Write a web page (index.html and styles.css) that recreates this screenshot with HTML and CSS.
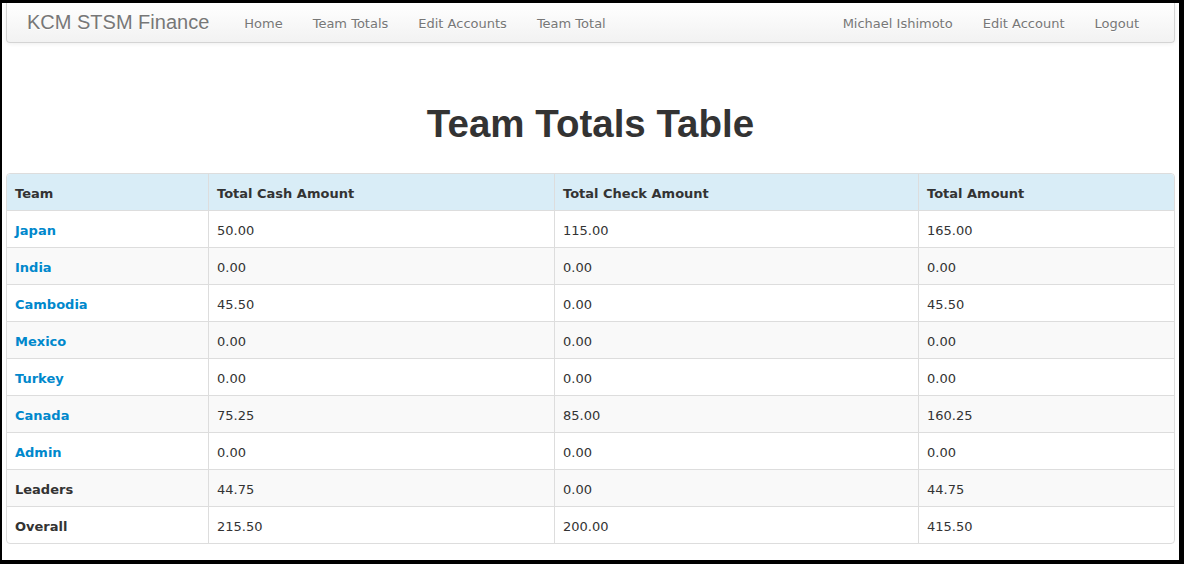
FILE: index.html
```html
<!DOCTYPE html>
<html lang="en">
<head>
<meta charset="utf-8">
<title>Team Totals</title>
<link rel="stylesheet" href="styles.css">
</head>
<body>
<div class="page">
  <div class="navbar">
    <a class="brand" href="#">KCM STSM Finance</a>
    <ul class="nav">
      <li><a href="#">Home</a></li>
      <li><a href="#">Team Totals</a></li>
      <li><a href="#">Edit Accounts</a></li>
      <li><a href="#">Team Total</a></li>
    </ul>
    <ul class="nav nav-right">
      <li><a href="#">Michael Ishimoto</a></li>
      <li><a href="#">Edit Account</a></li>
      <li><a href="#">Logout</a></li>
    </ul>
  </div>

  <h1 class="title">Team Totals Table</h1>

  <table class="totals">
    <colgroup>
      <col class="c1"><col class="c2"><col class="c3"><col class="c4">
    </colgroup>
    <thead>
      <tr><th>Team</th><th>Total Cash Amount</th><th>Total Check Amount</th><th>Total Amount</th></tr>
    </thead>
    <tbody>
      <tr><td><a class="team" href="#">Japan</a></td><td>50.00</td><td>115.00</td><td>165.00</td></tr>
      <tr><td><a class="team" href="#">India</a></td><td>0.00</td><td>0.00</td><td>0.00</td></tr>
      <tr><td><a class="team" href="#">Cambodia</a></td><td>45.50</td><td>0.00</td><td>45.50</td></tr>
      <tr><td><a class="team" href="#">Mexico</a></td><td>0.00</td><td>0.00</td><td>0.00</td></tr>
      <tr><td><a class="team" href="#">Turkey</a></td><td>0.00</td><td>0.00</td><td>0.00</td></tr>
      <tr><td><a class="team" href="#">Canada</a></td><td>75.25</td><td>85.00</td><td>160.25</td></tr>
      <tr><td><a class="team" href="#">Admin</a></td><td>0.00</td><td>0.00</td><td>0.00</td></tr>
      <tr><td><span class="label-strong">Leaders</span></td><td>44.75</td><td>0.00</td><td>44.75</td></tr>
      <tr><td><span class="label-strong">Overall</span></td><td>215.50</td><td>200.00</td><td>415.50</td></tr>
    </tbody>
  </table>
</div>
</body>
</html>
```

FILE: styles.css
```css
html, body {
  margin: 0;
  height: 100%;
}

body {
  background: #000;
  padding: 3px 5px 4px 2px;
  box-sizing: border-box;
  font-family: "DejaVu Sans", Verdana, sans-serif;
  font-size: 13px;
  line-height: 20px;
  color: #333;
}

.page {
  background: #fff;
  height: 557px;
  padding: 0 4px;
  box-sizing: border-box;
  overflow: hidden;
}

.navbar {
  display: flex;
  align-items: flex-start;
  height: 40px;
  box-sizing: border-box;
  padding: 0 20px;
  background: linear-gradient(to bottom, #ffffff, #f2f2f2);
  border: 1px solid #d4d4d4;
  border-top: 0;
  border-radius: 0 0 4px 4px;
  box-shadow: 0 1px 4px rgba(0, 0, 0, 0.065);
}

.brand {
  font-family: "Liberation Sans", Arial, sans-serif;
  font-size: 20px;
  line-height: 20px;
  color: #777;
  text-decoration: none;
  padding: 9px 20px 10px 0;
  text-shadow: 0 1px 0 #fff;
}

.nav {
  display: flex;
  list-style: none;
  margin: 0;
  padding: 0;
}

.nav-right {
  margin-left: auto;
}

.nav a {
  display: block;
  padding: 11px 15px 8px;
  color: #777;
  text-decoration: none;
  text-shadow: 0 1px 0 #fff;
}

.title {
  margin: 61px 0 29px;
  font-family: "Liberation Sans", Arial, sans-serif;
  font-size: 38.5px;
  line-height: 40px;
  font-weight: bold;
  text-align: center;
  color: #333;
}

.totals {
  width: 100%;
  table-layout: fixed;
  border-collapse: separate;
  border-spacing: 0;
  border: 1px solid #ddd;
  border-radius: 4px;
}

.c1 { width: 201px; }
.c2 { width: 346px; }
.c3 { width: 364px; }

.totals th,
.totals td {
  padding: 10px 8px 6px;
  line-height: 20px;
  text-align: left;
  vertical-align: top;
  border-left: 1px solid #ddd;
  border-top: 1px solid #ddd;
}

.totals th:first-child,
.totals td:first-child {
  border-left: 0;
}

.totals thead th {
  border-top: 0;
  background: #d9edf7;
  font-weight: bold;
}

.totals thead th:first-child { border-top-left-radius: 4px; }
.totals thead th:last-child { border-top-right-radius: 4px; }
.totals tbody tr:last-child td:first-child { border-bottom-left-radius: 4px; }
.totals tbody tr:last-child td:last-child { border-bottom-right-radius: 4px; }

.totals tbody tr:nth-child(even) td {
  background: #f9f9f9;
}

.team {
  color: #0088cc;
  font-weight: bold;
  text-decoration: none;
}

.label-strong {
  font-weight: bold;
}
```
